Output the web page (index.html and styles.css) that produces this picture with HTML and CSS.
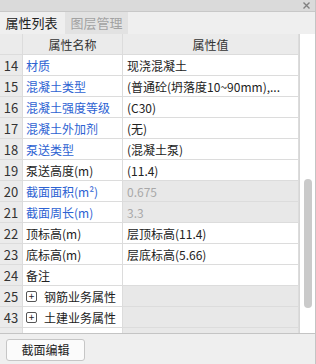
FILE: index.html
```html
<!DOCTYPE html>
<html lang="zh-CN">
<head>
    <meta charset="utf-8">
    <title>属性列表</title>
    <link rel="stylesheet" href="styles.css">
</head>
<body>
    <div class="panel">
        <div class="titlebar">
            <svg class="close" width="7" height="7" viewBox="0 0 7 7">
                <path d="M0.5 0.5 L6.5 6.5 M6.5 0.5 L0.5 6.5" stroke="#808080" stroke-width="1.4"/>
            </svg>
        </div>
        <div class="tabs">
            <div class="tab active">属性列表</div>
            <div class="tab">图层管理</div>
        </div>

        <!-- property grid -->
        <div class="grid-wrap">
            <div class="grid">
                <div class="row head">
                    <div class="num"></div>
                    <div class="name">属性名称</div>
                    <div class="val">属性值</div>
                </div>
                <div class="row">
                    <div class="num">14</div>
                    <div class="name blue">材质</div>
                    <div class="val">现浇混凝土</div>
                </div>
                <div class="row">
                    <div class="num">15</div>
                    <div class="name blue">混凝土类型</div>
                    <div class="val">(普通砼(坍落度10~90mm),...</div>
                </div>
                <div class="row">
                    <div class="num">16</div>
                    <div class="name blue">混凝土强度等级</div>
                    <div class="val">(C30)</div>
                </div>
                <div class="row">
                    <div class="num">17</div>
                    <div class="name blue">混凝土外加剂</div>
                    <div class="val">(无)</div>
                </div>
                <div class="row">
                    <div class="num">18</div>
                    <div class="name blue">泵送类型</div>
                    <div class="val">(混凝土泵)</div>
                </div>
                <div class="row">
                    <div class="num">19</div>
                    <div class="name">泵送高度(m)</div>
                    <div class="val">(11.4)</div>
                </div>
                <div class="row">
                    <div class="num">20</div>
                    <div class="name blue">截面面积(m²)</div>
                    <div class="val readonly">0.675</div>
                </div>
                <div class="row">
                    <div class="num">21</div>
                    <div class="name blue">截面周长(m)</div>
                    <div class="val readonly">3.3</div>
                </div>
                <div class="row">
                    <div class="num">22</div>
                    <div class="name">顶标高(m)</div>
                    <div class="val">层顶标高(11.4)</div>
                </div>
                <div class="row">
                    <div class="num">23</div>
                    <div class="name">底标高(m)</div>
                    <div class="val">层底标高(5.66)</div>
                </div>
                <div class="row">
                    <div class="num">24</div>
                    <div class="name">备注</div>
                    <div class="val"></div>
                </div>
                <div class="row">
                    <div class="num">25</div>
                    <div class="name"><span class="plus">+</span>钢筋业务属性</div>
                    <div class="val group"></div>
                </div>
                <div class="row">
                    <div class="num">43</div>
                    <div class="name"><span class="plus">+</span>土建业务属性</div>
                    <div class="val group"></div>
                </div>
                <!-- next row, cut off by the bottom edge -->
                <div class="row">
                    <div class="num"></div>
                    <div class="name"><span class="plus"></span></div>
                    <div class="val group"></div>
                </div>
            </div>
            <div class="scroll">
                <div class="thumb"></div>
            </div>
        </div>

        <div class="footer">
            <button class="btn">截面编辑</button>
        </div>
    </div>
</body>
</html>
```

FILE: styles.css
```css
body {
    margin: 0;
    padding: 0;
    font-family: "Noto Sans CJK SC", "Noto Sans", sans-serif;
    font-size: 12px;
    color: #222;
    background-color: #efefef;
}
.panel {
    width: 316px;
    height: 364px;
    display: flex;
    flex-direction: column;
    background-color: #efefef;
    box-sizing: border-box;
    border-right: 1px solid #c4c4c4;
    overflow: hidden;
}
.titlebar {
    height: 12px;
    flex: none;
    background-color: #dadada;
    border-bottom: 1px solid #c8c8c8;
    box-sizing: border-box;
    display: flex;
    justify-content: flex-end;
    align-items: center;
    padding-right: 5px;
}
.tabs {
    height: 22px;
    flex: none;
    display: flex;
    gap: 2px;
    background-color: #efefef;
}
.tab {
    width: 63px;
    line-height: 22px;
    text-align: center;
    font-size: 13px;
    color: #a2a2a2;
    background-color: #e2e2e2;
}
.tab.active {
    color: #222;
    background-color: #efefef;
}
.grid-wrap {
    height: 300px;
    flex: none;
    display: flex;
    border-bottom: 1px solid #c4c4c4;
    box-sizing: border-box;
}
.grid {
    width: 299px;
    overflow: hidden;
    background-color: #fff;
}
.row {
    display: grid;
    grid-template-columns: 23px 100px 176px;
    height: 21px;
    border-bottom: 1px solid #dcdcdc;
    box-sizing: border-box;
}
.row > div {
    display: flex;
    align-items: center;
    white-space: nowrap;
    overflow: hidden;
    border-right: 1px solid #dcdcdc;
}
.num {
    justify-content: center;
    background-color: #ebebeb;
    color: #333;
    font-size: 13px;
}
.name {
    padding-left: 3px;
}
.val {
    padding-left: 4px;
}
.row.head > div {
    background-color: #ebebeb;
    justify-content: center;
    padding-left: 0;
    color: #333;
}
.blue {
    color: #2d62d2;
}
.readonly {
    background-color: #e8e8e8;
    color: #a8a8a8;
}
.group {
    background-color: #e8e8e8;
}
.plus {
    display: inline-flex;
    align-items: center;
    justify-content: center;
    width: 9px;
    height: 9px;
    border: 1px solid #555;
    border-radius: 2px;
    font-size: 10px;
    line-height: 1;
    margin-right: 7px;
    color: #222;
}
.scroll {
    width: 16px;
    background-color: #fff;
    border-left: 1px solid #d6d6d6;
    box-sizing: border-box;
    display: flex;
    flex-direction: column;
    align-items: center;
}
.thumb {
    width: 8px;
    height: 129px;
    margin-top: 145px;
    border-radius: 4px;
    background-color: #cacaca;
}
.footer {
    flex: 1;
    padding: 5px 6px;
    display: flex;
    align-items: flex-start;
}
.btn {
    width: 79px;
    height: 22px;
    font-family: "Noto Sans CJK SC", "Noto Sans", sans-serif;
    font-size: 12px;
    line-height: 20px;
    color: #222;
    background-color: #fbfbfb;
    border: 1px solid #c6c6c6;
    border-radius: 3px;
    padding: 0;
}
```
